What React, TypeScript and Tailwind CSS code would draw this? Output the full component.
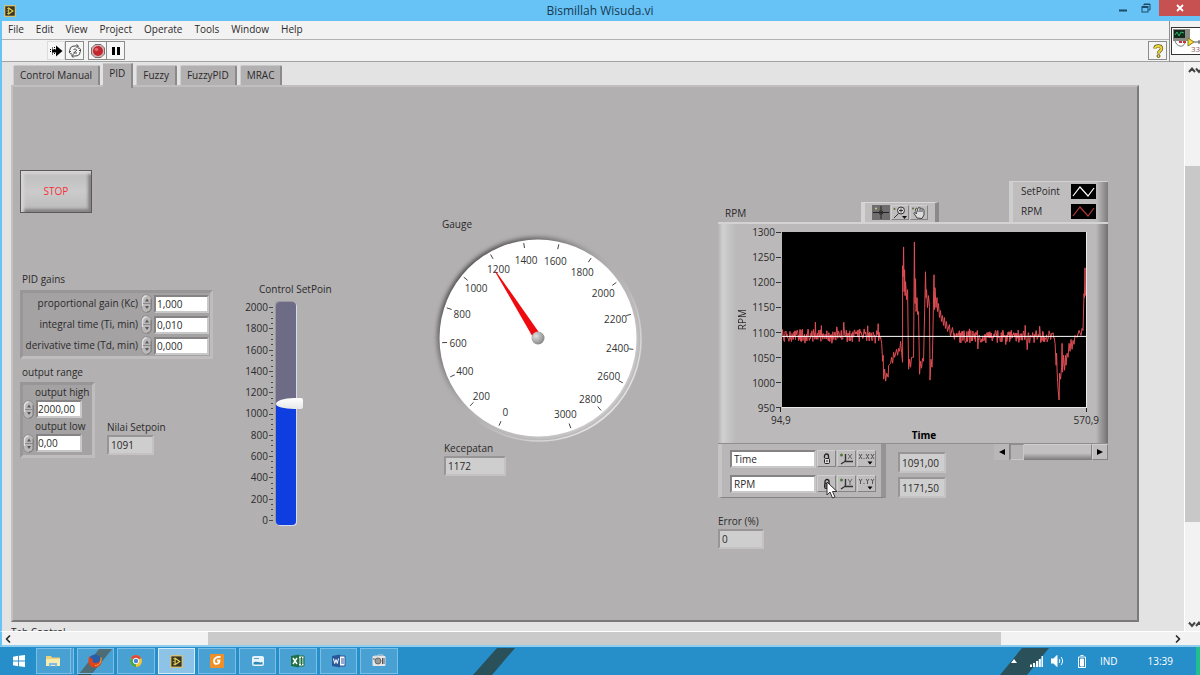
import * as React from "react";
import { ChevronLeft, ChevronRight } from "lucide-react";

const menus = ["File", "Edit", "View", "Project", "Operate", "Tools", "Window", "Help"];
const tabs = ["Control Manual", "PID", "Fuzzy", "FuzzyPID", "MRAC"];

const SETPOINT = 1091;
const SPEED = 1172;

/* ---------- shared controls ---------- */

function Spinner({ label }: { label: string }) {
  return (
    <button type="button" aria-label={label} className="mr-0.5 h-[19px] w-[11px] shrink-0">
      <svg viewBox="0 0 11 19" className="size-full">
        <rect x="0.5" y="0.5" width="10" height="18" rx="5" fill="#b9b7b8" stroke="#8f8d8e" />
        <path d="M1.5 12V6a4 4 0 0 1 4-4" stroke="#e2e1e1" strokeWidth="1.5" fill="none" />
        <path d="M10 5v8a4 4 0 0 1-4 5" stroke="#7b797a" fill="none" />
        <path d="M2 9.5h8" stroke="#8a8889" />
        <path d="m4 7.5 2-3 2 3zM4 12l2 3 2-3z" fill="#5a5959" />
      </svg>
    </button>
  );
}

type FieldProps = { id: string; value: string; className?: string };

function NumberField({ id, value, className = "" }: FieldProps) {
  return (
    <input
      id={id}
      aria-label={id}
      defaultValue={value}
      className={`h-[18px] min-w-0 border-2 border-t-[#858384] border-l-[#858384] border-r-[#c9c8c8] border-b-[#c9c8c8] bg-white outline-none ${className}`}
    />
  );
}

function Indicator({ id, value, className = "" }: FieldProps) {
  return (
    <input
      id={id}
      readOnly
      value={value}
      aria-label={id}
      className={`min-w-0 border-2 border-t-[#979596] border-l-[#979596] border-r-[#c4c2c3] border-b-[#c4c2c3] bg-[#cfcece] outline-none ${className}`}
    />
  );
}

/* ---------- window chrome ---------- */

function LabviewIcon({ className }: { className?: string }) {
  return (
    <svg viewBox="0 0 14 14" className={className}>
      <rect width="14" height="14" rx="1" fill="#cfc27a" />
      <rect x="1.5" y="1.5" width="11" height="11" fill="#3a3428" />
      <path d="M3.5 4h2M3.5 10h2" stroke="#d8c860" />
      <path d="M5.5 3.5 10.5 7l-5 3.5z" fill="#3a3428" stroke="#ecd94e" strokeWidth="1.2" />
      <path d="M3 7h2" stroke="#b3a868" />
    </svg>
  );
}

function TitleBar() {
  return (
    <header className="flex h-[21px] shrink-0 items-center bg-[#67c2f6]">
      <div className="flex-1 pl-1">
        <LabviewIcon className="size-3" />
      </div>
      <h1 className="text-xs text-[#173b52]">Bismillah Wisuda.vi</h1>
      <div className="flex flex-1 items-start justify-end self-stretch pl-1">
        <button type="button" aria-label="Minimize" className="flex h-4 w-[22px] items-center justify-center">
          <svg viewBox="0 0 10 10" className="size-2.5">
            <path d="M1 7.5h8" stroke="#1d4a66" strokeWidth="2" />
          </svg>
        </button>
        <button type="button" aria-label="Restore" className="flex h-4 w-[23px] items-center justify-center">
          <svg viewBox="0 0 10 10" className="size-2.5" fill="none" stroke="#1d4a66">
            <path d="M3 2.5V1h6v6H7.5M3 1.5h6" />
            <rect x="1" y="3.5" width="6" height="5.5" />
            <path d="M1 4.5h6" />
          </svg>
        </button>
        <button type="button" aria-label="Close" className="ml-0.5 flex h-4 w-[41px] items-center justify-center bg-[#c75050]">
          <svg viewBox="0 0 8 8" className="size-2">
            <path d="m1 1 6 6M7 1 1 7" stroke="#fff" strokeWidth="1.8" />
          </svg>
        </button>
      </div>
    </header>
  );
}

const toolButton = "flex h-[19px] w-[19px] items-center justify-center border border-[#8d8c8d] bg-[#f7f6f7]";

function Toolbar() {
  return (
    <div className="flex h-[22px] items-center border-b border-[#a3a2a3] pl-[45px]">
      <button type="button" aria-label="Run" className="flex h-[19px] w-[18px] items-center justify-center border border-[#dddcdd] bg-[#f7f6f7]">
        <svg viewBox="0 0 14 12" className="h-3 w-3.5">
          <path d="M7 4V0.5L13.5 6 7 11.5V8z" fill="#000" />
          <path d="M5.5 2v8M3.5 2.5v7M1.5 4v4" stroke="#000" strokeDasharray="1 1" />
          <path d="M3 6h5" stroke="#000" strokeWidth="3" />
        </svg>
      </button>
      <button type="button" aria-label="Run continuously" className={toolButton}>
        <svg viewBox="0 0 14 14" className="size-3.5" fill="none" stroke="#444">
          <path d="M2 6c0-3 2-4 5-4h3M8.5 0.5 10.5 2 8.5 4" />
          <path d="M12 8c0 3-2 4-5 4H4M5.5 10 3.5 12l2 1.5" />
          <path d="M10 4c2 0 3 1 2.5 3.5L11 6M4 10c-2 0-3-1-2.5-3.5L3 8" />
          <path d="M5.5 6c.5-1.5 3.5-1 3 .5L5.5 9H9" />
        </svg>
      </button>
      <button type="button" aria-label="Abort" className={`ml-1 ${toolButton}`}>
        <svg viewBox="0 0 14 14" className="size-3.5">
          <path d="M4 0.5h6L13.5 4v6L10 13.5H4L0.5 10V4z" fill="#cdb5b5" stroke="#7b6a6a" />
          <circle cx="7" cy="7" r="5" fill="#c4262f" />
          <circle cx="5.5" cy="5.5" r="1.8" fill="#e0666c" />
        </svg>
      </button>
      <button type="button" aria-label="Pause" className={`-ml-px ${toolButton}`}>
        <svg viewBox="0 0 10 10" className="size-2.5">
          <path d="M1 1h3v8H1zM6 1h3v8H6z" fill="#000" />
        </svg>
      </button>
      <button type="button" aria-label="Context help" className={`ml-auto mr-0.5 ${toolButton}`}>
        <svg viewBox="0 0 12 14" className="h-3.5 w-3" fill="none">
          <path d="M3 4.5c0-3.5 6.5-3.5 6.5 0C9.5 7 6.5 7 6.5 9.5" stroke="#5d5824" strokeWidth="3.4" />
          <path d="M3 4.5c0-3.5 6.5-3.5 6.5 0C9.5 7 6.5 7 6.5 9.5" stroke="#ecd737" strokeWidth="2" />
          <circle cx="6.5" cy="12" r="1.5" fill="#ecd737" stroke="#5d5824" />
        </svg>
      </button>
    </div>
  );
}

function MenuArea() {
  return (
    <div className="flex h-[41px] shrink-0 border-l-2 border-[#67c2f6] bg-[#f3f2f3]">
      <div className="min-w-0 flex-1">
        <nav className="flex h-[19px] items-center gap-3 border-b border-[#b3b2b3] pb-px pl-1.5">
          {menus.map((menu) => (
            <button key={menu} type="button">
              {menu}
            </button>
          ))}
        </nav>
        <Toolbar />
      </div>
      <div className="flex w-[31px] items-center overflow-hidden border-b border-l border-[#8d8c8d] pl-px">
        <svg viewBox="0 0 30 28" className="h-7 w-[30px] shrink-0">
          <rect x="0.5" y="0.5" width="34" height="27" fill="#fff" stroke="#333" />
          <rect x="2" y="2" width="17" height="12" fill="#8b8b85" />
          <rect x="3" y="3" width="11" height="8" fill="#122b1d" />
          <path d="m4 8 2-3 2 4 2-4 3 1" stroke="#2fb56a" fill="none" />
          <path d="M4 14c2 6 8 7 10 2" stroke="#777" fill="none" />
          <path d="M8 15h8" stroke="#c43a3a" strokeWidth="2" strokeDasharray="3 1" />
          <path d="m17 11 6 4-6 4z" fill="#f1dc3a" stroke="#867a1c" />
          <path d="M23 15h7M28 13v4" stroke="#555" />
          <text x="20" y="25" fontSize="8" fill="#8a5a5a">
            33
          </text>
        </svg>
      </div>
    </div>
  );
}

/* ---------- left column ---------- */

const gains = [
  { id: "kc", label: "proportional gain (Kc)", value: "1,000" },
  { id: "ti", label: "integral time (Ti, min)", value: "0,010" },
  { id: "td", label: "derivative time (Td, min)", value: "0,000" },
];

const outputs = [
  { id: "out-high", label: "output high", value: "2000,00" },
  { id: "out-low", label: "output low", value: "0,00" },
];

const cluster = "border-[3px] border-t-[#989697] border-l-[#989697] border-r-[#bfbdbe] border-b-[#bfbdbe] bg-[#a4a2a3]";

function PidColumn() {
  return (
    <section className="pt-[82px]">
      <button
        type="button"
        className="h-[43px] w-[72px] border border-[#5b5a5b] bg-linear-to-b from-[#bdbcbc] via-[#cccbcb] to-[#bbbaba] text-[#f0323a] shadow-[inset_3px_3px_3px_#d6d5d5,inset_-3px_-3px_3px_#858384]"
      >
        STOP
      </button>
      <h2 className="mt-[58px] pl-0.5 leading-4">PID gains</h2>
      <div className={`mt-[3px] w-[193px] ${cluster}`}>
        {gains.map((gain) => (
          <div key={gain.id} className="flex h-[21px] items-center justify-end pr-px">
            <label htmlFor={gain.id} className="whitespace-nowrap">
              {gain.label}
            </label>
            <span className="ml-[3px] flex">
              <Spinner label={`Step ${gain.label}`} />
            </span>
            <NumberField id={gain.id} value={gain.value} className="w-[55px] px-px" />
          </div>
        ))}
      </div>
      <h2 className="mt-[5px] pl-0.5 leading-4">output range</h2>
      <div className="mt-0.5 flex items-end gap-3">
        <div className={`w-[75px] pb-0.5 ${cluster}`}>
          {outputs.map((output) => (
            <div key={output.id}>
              <label htmlFor={output.id} className="block h-3.5 pl-3 leading-[14px] whitespace-nowrap">
                {output.label}
              </label>
              <div className="flex h-5 items-center">
                <Spinner label={`Step ${output.label}`} />
                <NumberField id={output.id} value={output.value} className="w-[46px]" />
              </div>
            </div>
          ))}
        </div>
        <div className="mb-[3px]">
          <label htmlFor="nilai" className="block leading-4 whitespace-nowrap">
            Nilai Setpoin
          </label>
          <Indicator id="nilai" value={String(SETPOINT)} className="h-5 w-[47px] px-0.5" />
        </div>
      </div>
    </section>
  );
}

/* ---------- set point slider ---------- */

const sliderMarks = [2000, 1800, 1600, 1400, 1200, 1000, 800, 600, 400, 200, 0];

function SetpointSlider() {
  const [value, setValue] = React.useState(SETPOINT);
  const fill = 2.5 + (value / 2000) * 95;

  return (
    <section className="pt-[193px]">
      <label htmlFor="setpoint" className="ml-[15px] block leading-4 whitespace-nowrap">
        Control SetPoin
      </label>
      <div className="mt-1 flex h-[225px] items-center">
        <div className="flex h-full w-6 flex-col justify-between text-right">
          {sliderMarks.map((mark) => (
            <span key={mark} className="h-3 leading-3">
              {mark}
            </span>
          ))}
        </div>
        <svg viewBox="0 0 5 225" className="h-full w-[5px] shrink-0 overflow-visible" stroke="#4b4a4a">
          {Array.from({ length: 41 }, (_, i) => (
            <path key={i} d={`M${i % 4 === 0 ? 1 : 3} ${Math.round(6 + i * 5.325) + 0.5}H5`} />
          ))}
        </svg>
        <input
          id="setpoint"
          type="range"
          min={0}
          max={2000}
          value={value}
          onChange={(e) => setValue(Number(e.target.value))}
          style={{ background: `linear-gradient(to top, #0e3de0 ${fill}%, #6d6b86 ${fill}%)` }}
          className="ml-[3px] h-[223px] w-5 appearance-none rounded-sm shadow-[1px_1px_0_#d5dcf0,-1px_-1px_0_#9997a0] [direction:rtl] [writing-mode:vertical-lr] [&::-webkit-slider-thumb]:ml-[7px] [&::-webkit-slider-thumb]:h-[11px] [&::-webkit-slider-thumb]:w-[27px] [&::-webkit-slider-thumb]:appearance-none [&::-webkit-slider-thumb]:rounded-[18px_2px_2px_18px/6px_2px_2px_5px] [&::-webkit-slider-thumb]:bg-linear-to-b [&::-webkit-slider-thumb]:from-white [&::-webkit-slider-thumb]:to-[#e8e7e7]"
        />
      </div>
    </section>
  );
}

/* ---------- gauge ---------- */

const C = 102;
const gaugeAngle = (v: number) => 204 + (v / 3000) * 316;

function polar(v: number, r: number) {
  const a = (gaugeAngle(v) * Math.PI) / 180;
  return [C + r * Math.sin(a), C - r * Math.cos(a)];
}

function Gauge() {
  const marks = Array.from({ length: 16 }, (_, i) => i * 200);

  return (
    <section className="pt-32">
      <h2 className="pl-1.5 leading-4">Gauge</h2>
      <svg viewBox="0 0 204 204" className="mt-1 size-[204px] overflow-visible" role="img" aria-label={`Gauge ${SPEED}`}>
        <defs>
          <linearGradient id="rim" x1="0" y1="0" x2="1" y2="1">
            <stop offset="0.15" stopColor="#4d4b4c" />
            <stop offset="0.5" stopColor="#b2b0b1" />
            <stop offset="0.85" stopColor="#d4d3d3" />
          </linearGradient>
          <linearGradient id="shine" x1="0" y1="0" x2="1" y2="1">
            <stop offset="0.55" stopColor="#e6e5e5" stopOpacity="0" />
            <stop offset="0.85" stopColor="#e6e5e5" />
          </linearGradient>
          <radialGradient id="hub" cx="0.35" cy="0.35" r="0.7">
            <stop offset="0" stopColor="#e0e0e0" />
            <stop offset="1" stopColor="#858585" />
          </radialGradient>
          <filter id="soft">
            <feGaussianBlur stdDeviation="2" />
          </filter>
        </defs>
        <circle cx={C} cy={C} r="101" fill="url(#rim)" filter="url(#soft)" />
        <circle cx="103" cy="103" r="102" fill="none" stroke="url(#shine)" strokeWidth="1.5" />
        <circle cx="102" cy="102" r="98.5" fill="#fff" />
        {marks.map((m) => {
          const [x1, y1] = polar(m, 91);
          const [x2, y2] = polar(m, 96);
          const [tx, ty] = polar(m, 80);
          return (
            <g key={m}>
              <line x1={x1} y1={y1} x2={x2} y2={y2} stroke="#444" />
              <text x={tx} y={ty + 5} textAnchor="middle" fontSize="10" fill="#333">
                {m}
              </text>
            </g>
          );
        })}
        <path
          d={`M${C - 4} ${C}L${C - 0.5} ${C - 79}h1L${C + 4} ${C}z`}
          fill="#ee0a0e"
          transform={`rotate(${gaugeAngle(SPEED)} ${C} ${C})`}
        />
        <circle cx={C} cy={C} r="6.5" fill="url(#hub)" />
      </svg>
      <div className="pl-2">
        <label htmlFor="kecepatan" className="block leading-4">
          Kecepatan
        </label>
        <Indicator id="kecepatan" value={String(SPEED)} className="h-5 w-[62px] px-0.5" />
      </div>
    </section>
  );
}

/* ---------- RPM graph ---------- */

const PLOT_W = 305;
const PLOT_H = 176;
const yMarks = [1300, 1250, 1200, 1150, 1100, 1050, 1000, 950];

// small LCG so that the noise is the same on each render
function noise(from: number, to: number, base: number) {
  let seed = Math.round(from) * 7919 + 17;
  const rnd = () => {
    seed = (seed * 1103515245 + 12345) % 2147483648;
    return seed / 2147483648;
  };
  const pts: string[] = [];
  for (let x = from; x < to; x += 0.5) {
    const amp = rnd() > 0.88 ? 27 : 13;
    pts.push(`${x.toFixed(1)} ${(base + (rnd() - 0.5) * amp).toFixed(1)}`);
  }
  return pts.join(" ");
}

const swing =
  "99 106 100 112 101 130 101.5 124 102 148 103 138 104 150 105 142 106.5 146 107 134 109 132 110 126 111 132 112 121 113 126 115 118 116 124 117 117 118 120 119 110 120 121 121 131 " +
  "121 34 121.5 45 122 15 122.5 60 123 38 123.5 64 124 50 125 68 126 58 127 138 128 128 129 136 130 126 132 126 " +
  "132.8 10 133.5 72 134 47 134.5 80 135.5 66 136 83 137 80 138 143 139 130 140 137 141 127 142 130 " +
  "144 40 144.5 66 145 58 146 76 147 64 148 75 148.5 149 149.5 128 150.5 136 151 122 " +
  "152.5 43 153 78 153.5 56 154.5 76 155.5 66 156 80 157 72 158 86 159 79 160 90 161 84 162 94 163 86 164 97 165 90 166 100 168 93 169 105 171 96 173 108";

const tail =
  "273 106 274 112 275 134 275.5 122 276 140 277 158 278 169 278.5 142 279.5 148 280.5 136 281 112 281.5 141 282.5 124 283.5 139 284.5 124 285 134 286 122 287 126 288 112 289 120 290 108 291 118 292 109 293 113 294 104 296 106 298 99 300 104 301 97 302 99 303 62 303.5 66 304 36 304.5 64";

const trace = `${noise(0, 99, 104)} ${swing} ${noise(173, 273, 105)} ${tail}`;

function Swatch({ color }: { color: string }) {
  return (
    <svg viewBox="0 0 25 15" className="h-[15px] w-[25px] bg-black">
      <path d="m2 12 7-9 8 9 6-8" fill="none" stroke={color} strokeWidth="1.2" />
    </svg>
  );
}

const raised = "border border-t-[#d0cfcf] border-l-[#d0cfcf] border-r-[#858384] border-b-[#858384] bg-[#bfbdbe]";

function GraphPalette() {
  return (
    <div className="flex h-5 w-[78px] items-center justify-center gap-px border-t border-r-4 border-l-4 border-t-[#dad9d9] border-r-[#8b898a] border-l-[#d5d4d4] bg-[#bfbdbe]">
      <button type="button" aria-label="Cursor" className="flex h-[15px] w-[18px] items-center justify-center bg-[#6f6d6e]">
        <svg viewBox="0 0 16 13" className="h-[13px] w-4">
          <path d="M8 0v13M0 6.5h16" stroke="#222" />
          <path d="M6.5 5h3v3h-3z" fill="none" stroke="#333" />
          <circle cx="3" cy="2.5" r="1" fill="#c9d66b" />
        </svg>
      </button>
      <button type="button" aria-label="Zoom" className={`flex h-[15px] w-[18px] items-center justify-center ${raised}`}>
        <svg viewBox="0 0 16 13" className="h-[13px] w-4" fill="none" stroke="#333">
          <circle cx="9" cy="4.5" r="3.5" fill="#dcdbdb" />
          <path d="M7 4.5h4M9 2.5v4M6.5 7.5 2 12" />
          <path d="M10 10h5l-2.5 3z" fill="#111" stroke="none" />
          <circle cx="2.5" cy="3" r="1" fill="#5c6c2b" stroke="none" />
        </svg>
      </button>
      <button type="button" aria-label="Pan" className={`flex h-[15px] w-[18px] items-center justify-center ${raised}`}>
        <svg viewBox="0 0 16 13" className="h-[13px] w-4" fill="#dcdbdb" stroke="#444">
          <path d="M6 12 3 7.5c0-1.5 1.5-1 2.5.5L4.5 3c.5-1.5 2-.5 2 .5l1-2c1-.5 1.5 0 1.5 1 1-.8 2-.3 2 .7 1-.5 2 0 2 1V9l-2 3.5z" />
          <path d="M6.5 3.5 7 6M9 2.5V6M11 3.5V6" />
          <circle cx="2" cy="2.5" r="1" fill="#5c6c2b" stroke="none" />
        </svg>
      </button>
    </div>
  );
}

function Lock({ open }: { open?: boolean }) {
  return (
    <svg viewBox="0 0 14 14" className="size-3.5" fill="none" stroke="#222">
      <path d={open ? "M4.5 6V4a2 2 0 0 1 4 0v3" : "M5 7V4.5a2 2 0 0 1 4 0V7"} strokeWidth="1.3" />
      <rect x="4.5" y="6.5" width="5" height="5" rx="1" fill={open ? "#ddd" : "#666"} />
      <path d="M7 8v2" />
    </svg>
  );
}

function AxisButtons({ axis, open }: { axis: string; open?: boolean }) {
  const face = `flex h-[17px] w-[19px] items-center justify-center ${raised}`;
  return (
    <div className="flex gap-px">
      <button type="button" aria-label={`Lock ${axis}`} className={face}>
        <Lock open={open} />
      </button>
      <button type="button" aria-label={`Autoscale ${axis}`} className={face}>
        <svg viewBox="0 0 16 14" className="h-3.5 w-4" fill="none" stroke="#333">
          <circle cx="2.5" cy="3" r="1.5" fill="#4f7a35" stroke="none" />
          <path d="M6.5 2v8M5 9.5h9M2 12l3-2" strokeWidth="1.4" />
          {axis === "X" ? <path d="m9 2 4 5M13 2 9 7" stroke="#666" /> : <path d="m9 2 2 3 2-3M11 5v3" stroke="#666" />}
        </svg>
      </button>
      <button type="button" aria-label={`Format ${axis}`} className={face}>
        <svg viewBox="0 0 17 14" className="h-3.5 w-[17px]" stroke="#555" fill="none">
          {axis === "X" ? (
            <path d="m1 2 3 5M4 2 1 7M8 2l3 5M11 2 8 7M13 2l3 5M16 2l-3 5M6 6v1" />
          ) : (
            <path d="m1 2 1.5 2L4 2M2.5 4v3M8 2l1.5 2L11 2M9.5 4v3M13 2l1.5 2L16 2M14.5 4v3M6 6v1" />
          )}
          <path d="M9.5 9.5h5L12 12.5z" fill="#000" stroke="none" />
        </svg>
      </button>
    </div>
  );
}

function ScaleLegend() {
  return (
    <div className="relative flex h-[54px] w-[168px] flex-col justify-center gap-[7px] border-r-[5px] border-b border-l-4 border-r-[#959394] border-b-[#858384] border-l-[#c6c5c5] bg-[#b8b6b7] pt-px pl-2">
      <div className="flex items-center gap-px">
        <NumberField id="x-name" value="Time" className="w-[86px] px-0.5" />
        <AxisButtons axis="X" open />
      </div>
      <div className="flex items-center gap-px">
        <NumberField id="y-name" value="RPM" className="w-[86px] px-0.5" />
        <AxisButtons axis="Y" />
      </div>
      {/* mouse pointer */}
      <svg viewBox="0 0 12 18" className="absolute top-[37px] left-[104px] z-10 h-[18px] w-3">
        <path d="M1 1v13l3-3 2.5 6 2.5-1-2.5-5.5H11z" fill="#fff" stroke="#333" />
      </svg>
    </div>
  );
}

function RpmGraph() {
  return (
    <section className="pt-[93px]">
      <div className="flex h-[41px] items-end">
        <h2 className="mb-px w-[143px] pl-[7px] leading-4">RPM</h2>
        <GraphPalette />
        <div className="ml-auto flex h-[41px] w-[99px] flex-col gap-1 border-t border-l-4 border-t-[#d4d3d3] border-l-[#cfcece] bg-linear-to-r from-[#bfbdbe] from-88% to-[#7e7c7d] pt-px pr-3 pl-2">
          <div className="flex items-center justify-between leading-4">
            <span>SetPoint</span>
            <Swatch color="#fff" />
          </div>
          <div className="flex items-center justify-between leading-4">
            <span>RPM</span>
            <Swatch color="#b03a40" />
          </div>
        </div>
      </div>

      <div className="h-[222px] border-t-2 border-b border-t-[#d4d3d3] border-b-[#8f8d8e] bg-[linear-gradient(to_right,#b4b2b3_0,#d2d1d1_5px,#c4c3c3_12px,#bbb9ba_18px,#bbb9ba_calc(100%-12px),#a09e9f_calc(100%-8px),#858384_calc(100%-3px),#6f6d6e_100%)] pt-2">
        <div className="flex h-[176px] pr-[21px] pl-4">
          <div className="flex w-4 items-center justify-center">
            <span className="rotate-180 leading-4 [writing-mode:vertical-rl]">RPM</span>
          </div>
          <div className="-my-1.5 flex w-[25px] flex-col justify-between text-right">
            {yMarks.map((mark) => (
              <span key={mark} className="h-3 leading-3">
                {mark}
              </span>
            ))}
          </div>
          <svg viewBox="0 0 7 176" className="h-full w-[7px] shrink-0 overflow-visible" stroke="#333">
            {yMarks.map((mark, i) => (
              <path key={mark} d={`M1 ${i * 25 + 0.5}H6`} />
            ))}
          </svg>
          <svg
            viewBox={`0 0 ${PLOT_W} ${PLOT_H}`}
            preserveAspectRatio="none"
            className="h-full min-w-0 flex-1 border-r border-b border-[#e8e8e8] bg-black"
            role="img"
            aria-label="RPM over time"
          >
            <polyline points={trace} fill="none" stroke="#e04e55" strokeLinejoin="bevel" />
            <path d={`M0 105H${PLOT_W}`} stroke="#fff" />
          </svg>
        </div>
        <div className="flex justify-between pr-[9px] pl-[53px]">
          <div className="flex flex-col items-center">
            <i className="h-1 w-px bg-[#222]" />
            <span className="leading-4">94,9</span>
          </div>
          <div className="flex flex-col items-center">
            <i className="h-1 w-px bg-[#222]" />
            <span className="leading-4">570,9</span>
          </div>
        </div>
        <div className="mt-px pl-[22px] text-center leading-3 font-bold text-black">Time</div>
      </div>

      <div className="flex items-start">
        <ScaleLegend />
        <div className="mt-2 ml-3 flex flex-col gap-1">
          <Indicator id="SetPoint value" value="1091,00" className="h-[21px] w-12 px-0.5" />
          <Indicator id="RPM value" value="1171,50" className="h-[21px] w-12 px-0.5" />
        </div>
        <div className="ml-auto flex h-4 w-[114px]">
          <button type="button" aria-label="Scroll left" className="flex w-4 items-center justify-center border-r border-[#858384] bg-[#b9b7b8]">
            <svg viewBox="0 0 6 6" className="size-1.5">
              <path d="M6 0v6L0 3z" />
            </svg>
          </button>
          <div className="w-3.5 border border-t-[#8f8d8e] border-r-[#c9c8c8] border-b-[#c9c8c8] border-l-[#8f8d8e] bg-[#b5b3b4]" />
          <div className="flex-1 border-t border-r border-t-[#d0cfcf] border-r-[#858384] bg-linear-to-b from-[#c2c0c1] from-55% to-[#7b797a]" />
          <button type="button" aria-label="Scroll right" className={`flex w-4 items-center justify-center ${raised}`}>
            <svg viewBox="0 0 6 6" className="size-1.5">
              <path d="M0 0v6l6-3z" />
            </svg>
          </button>
        </div>
      </div>

      <label htmlFor="error" className="mt-[15px] block leading-4">
        Error (%)
      </label>
      <Indicator id="error" value="0" className="h-5 w-[46px] px-0.5" />
    </section>
  );
}

/* ---------- front panel ---------- */

function TabStrip() {
  return (
    <div role="tablist" className="flex h-[21px] items-end gap-[3px] pl-0.5">
      {tabs.map((tab) => {
        const active = tab === "PID";
        return (
          <button
            key={tab}
            type="button"
            role="tab"
            aria-selected={active}
            className={
              active
                ? "z-10 -mb-[3px] h-[25px] border-t border-r-2 border-t-[#c9c8c8] border-r-[#8b898a] bg-[#b2b0b1] px-1.5 pb-1.5"
                : "h-5 rounded-t-xs border-t border-r-2 border-l border-t-[#c9c8c8] border-r-[#8b898a] border-l-[#cfcece] bg-[#b2b0b1] px-1.5"
            }
          >
            {tab}
          </button>
        );
      })}
    </div>
  );
}

function FrontPanel() {
  return (
    <main className="flex min-h-0 flex-1 border-l-2 border-[#67c2f6] bg-[#e4e3e4]">
      <div className="flex min-w-0 flex-1 flex-col overflow-hidden pr-[45px] pl-[9px]">
        <div className="mt-0.5">
          <TabStrip />
        </div>
        <div className="grid min-h-0 flex-1 grid-cols-[224fr_192fr_282fr_390fr] border-2 border-t-[#c0bebf] border-r-[#7b797a] border-b-[#7b797a] border-l-[#c5c2bc] bg-[#b2b0b1] pt-px pr-[29px] pl-[7px]">
          <PidColumn />
          <SetpointSlider />
          <Gauge />
          <RpmGraph />
        </div>
        <div className="h-[9px] shrink-0 overflow-hidden pt-0.5 leading-4">Tab Control</div>
      </div>
      <div className="flex w-4 flex-col items-end border-l border-white bg-[#f3f2f3]">
        <svg viewBox="0 0 12 12" className="my-0.5 size-3 shrink-0" fill="none" stroke="#444" strokeWidth="2">
          <path d="m1 8 3-3.5L7 8M8 4.5 11 8l3-3.5" />
        </svg>
        <div className="mt-[88px] h-[356px] w-full bg-[#c9c8c9]" />
        <svg viewBox="0 0 12 12" className="mt-auto mb-px size-3 shrink-0" fill="none" stroke="#444" strokeWidth="2">
          <path d="m1 4.5 3 3.5 3-3.5M8 8l3-3.5L14 8" />
        </svg>
      </div>
    </main>
  );
}

function HorizontalScroll() {
  return (
    <div className="flex h-4 shrink-0 items-center border-t border-b-2 border-l-2 border-t-white border-b-[#8fcdf0] border-l-[#67c2f6] bg-[#f3f2f3] pr-4">
      <ChevronLeft className="size-3 shrink-0" strokeWidth={3.5} />
      <div className="flex h-full flex-1">
        <div className="grow-[194]" />
        <div className="h-full grow-[793] bg-[#cbcacb]" />
        <div className="grow-[171]" />
      </div>
      <ChevronRight className="size-3 shrink-0" strokeWidth={3.5} />
    </div>
  );
}

/* ---------- taskbar ---------- */

const apps: { name: string; icon: React.ReactNode }[] = [
  {
    name: "File Explorer",
    icon: (
      <>
        <path d="M1 3h5l1 1.5h8V13H1z" fill="#e9d27a" />
        <path d="M1 6h14v7H1z" fill="#f7ebb0" />
        <path d="M4 13.5V10h8v3.5h-2V12H6v1.5z" fill="#7dbce8" />
      </>
    ),
  },
  {
    name: "Firefox",
    icon: (
      <>
        <circle cx="8" cy="7.5" r="6" fill="#2b5ca8" />
        <path d="M2.5 3C0 8 2 14.5 8 14.5S15.5 9 14 4.5c-.5 4-3 6-6 5.5-2.5-.5-3-2-2-3.5L4 5.5z" fill="#e2431b" />
        <path d="M14 4.5c.5 5-2 8-6 8" stroke="#f6b02c" fill="none" />
      </>
    ),
  },
  {
    name: "Chrome",
    icon: (
      <>
        <circle cx="8" cy="8" r="6" fill="#f2c530" />
        <path d="M8 8 2.8 5A6 6 0 0 1 13.2 5z" fill="#dd4a3c" />
        <path d="M8 8 2.8 5A6 6 0 0 0 8 14z" fill="#45a557" />
        <circle cx="8" cy="8" r="2.8" fill="#4a86e0" stroke="#fff" />
      </>
    ),
  },
  { name: "LabVIEW", icon: null },
  {
    name: "GOM",
    icon: (
      <>
        <rect x="1" y="1" width="14" height="14" rx="1" fill="#ef8f27" />
        <path d="M11.5 4c-4-.5-7 1.5-6.5 4.5.5 3.5 5.5 3 5.5-1H8" stroke="#fff" strokeWidth="1.8" fill="none" />
      </>
    ),
  },
  {
    name: "Photos",
    icon: (
      <>
        <rect x="2" y="3" width="12" height="10" rx="2" fill="#e6f3fb" />
        <path d="M3.5 9.5c3-2 6 1 9-.5v2.5h-9z" fill="#2c87b8" />
        <path d="M4 5.5h5" stroke="#57a6cf" />
      </>
    ),
  },
  {
    name: "Excel",
    icon: (
      <>
        <path d="M8 3h6v10H8z" fill="#fff" stroke="#1f7145" />
        <path d="M9 6h5M9 8h5M9 10h5M11.5 4v8" stroke="#1f7145" />
        <path d="m1 3 8-1.5v13L1 13z" fill="#1f7145" />
        <path d="m3 5 4 6M7 5l-4 6" stroke="#fff" strokeWidth="1.5" />
      </>
    ),
  },
  {
    name: "Word",
    icon: (
      <>
        <path d="M8 3h6v10H8z" fill="#fff" stroke="#2a569a" />
        <path d="M10 6h3M10 8h3M10 10h3" stroke="#2a569a" />
        <path d="m1 3 8-1.5v13L1 13z" fill="#2a569a" />
        <path d="m2.5 5.5 1.2 5L5 6.5l1.3 4 1.2-5" stroke="#fff" fill="none" />
      </>
    ),
  },
  {
    name: "Snipping Tool",
    icon: (
      <>
        <rect x="1.5" y="3" width="13" height="10" rx="1" fill="#e6e6e6" />
        <path d="M3 3h4v-1h5v1" stroke="#ccc" fill="none" />
        <circle cx="7" cy="8" r="3" fill="#999" stroke="#666" />
        <path d="M11.5 5v6M13 5v6M3 5v2" stroke="#555" />
      </>
    ),
  },
];

function Taskbar() {
  return (
    <footer className="relative flex h-7 shrink-0 items-stretch bg-[#268ec9] text-white">
      {/* desktop stripes that show through the glass */}
      <svg viewBox="0 0 1200 28" preserveAspectRatio="none" className="absolute inset-0 size-full" fill="#2a505a">
        <path d="M497 1h18l-23 27h-19zM1022 1h27l-22 27h-27z" />
        <path d="M100 1h13L91 28H78z" />
      </svg>
      <button type="button" aria-label="Start" className="flex w-9 items-center justify-center pl-0.5">
        <svg viewBox="0 0 14 14" className="size-3" fill="#fff">
          <path d="m0 2 6-1v5.5H0zM7 .8 14 0v6.500H7zM0 7.500h6V13l-6-1zM7 7.500h7V14l-7-.8z" />
        </svg>
      </button>
      <div className="relative grid w-[362px] grid-cols-9 gap-[3px] py-px">
        {apps.map((app) => (
          <button
            key={app.name}
            type="button"
            aria-label={app.name}
            className={
              app.name === "LabVIEW"
                ? "flex items-center justify-center border border-[#d4ecfa] bg-[#8cc3e6]"
                : app.name === "File Explorer"
                  ? "flex items-center justify-center border border-r-4 border-double border-[#7cbfe6] bg-[#ffffff2a]"
                  : "flex items-center justify-center border border-[#7cbfe6] bg-[#ffffff2a]"
            }
          >
            {app.icon ? (
              <svg viewBox="0 0 16 16" className="size-4">
                {app.icon}
              </svg>
            ) : (
              <LabviewIcon className="size-[13px]" />
            )}
          </button>
        ))}
      </div>
      <div className="relative ml-auto flex items-center">
        <svg viewBox="0 0 6 4" className="h-1 w-1.5" fill="#fff">
          <path d="m0 4 3-4 3 4z" />
        </svg>
        <svg viewBox="0 0 13 11" className="ml-[13px] h-[11px] w-[13px]" stroke="#fff" strokeWidth="2">
          <path d="M1 11V8.5M4 11V7M7 11V5M9.8 11V3M12.5 11V0" />
        </svg>
        <svg viewBox="0 0 14 12" className="ml-2 h-3 w-3.5" fill="none" stroke="#fff">
          <path d="M0 4h2.5L6 .5v11L2.5 8H0z" fill="#fff" />
          <path d="M8 4c1 1 1 3 0 4M10 2c2 2.5 2 5.5 0 8" />
        </svg>
        <svg viewBox="0 0 8 13" className="ml-[13px] h-[13px] w-2" fill="none" stroke="#fff">
          <path d="M2.5 0.5h3M.5 2h7v10.5h-7z" />
          <path d="M2.5 4h3v7h-3z" fill="#fff" />
        </svg>
        <span className="ml-3.5">IND</span>
        <span className="mr-[23px] ml-[30px]">13:39</span>
        <i className="h-full w-1 bg-[#1fc08f]" />
      </div>
    </footer>
  );
}

export default function App() {
  return (
    <div className="flex h-screen flex-col overflow-hidden font-['Open_Sans','Noto_Sans',sans-serif] text-[10px] text-[#2b2a2a]">
      <TitleBar />
      <MenuArea />
      <FrontPanel />
      <HorizontalScroll />
      <Taskbar />
    </div>
  );
}
